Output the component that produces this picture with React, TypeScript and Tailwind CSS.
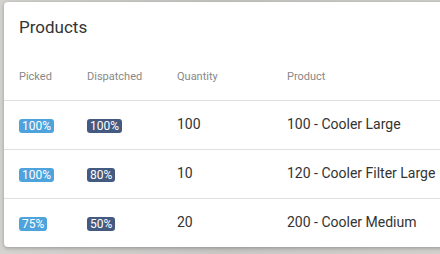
import React from 'react';

interface Row {
  picked: number;
  dispatched: number;
  quantity: number;
  product: string;
}

const rows: Row[] = [
  { picked: 100, dispatched: 100, quantity: 100, product: '100 - Cooler Large' },
  { picked: 100, dispatched: 80, quantity: 10, product: '120 - Cooler Filter Large' },
  { picked: 75, dispatched: 50, quantity: 20, product: '200 - Cooler Medium' },
];

const Badge = ({ value, dark }: { value: number; dark?: boolean }) => (
  <span
    className={`inline-flex items-center h-[14px] px-[3px] rounded-[3px] text-[12px] leading-none text-white ${dark ? 'bg-[#445a80]' : 'bg-[#4fa3dc]'}`}
  >
    {value}%
  </span>
);

export default function App() {
  return (
    <div className="w-[440px] h-[254px] overflow-hidden bg-gradient-to-r from-[#d6d4d1] via-[#c9c7c4] to-[#d3d1ce] font-['Roboto',sans-serif]">
      <div className="ml-[4px] mt-[2px] w-[460px] h-[245px] bg-white rounded-[4px] shadow-[0_1px_4px_rgba(0,0,0,0.3)]">
        <h1 className="pl-[15px] pt-[14px] h-[52px] text-[17px] text-[#333] leading-[22px]">Products</h1>
        <table className="w-full border-collapse text-left">
          <thead>
            <tr className="h-[46px] border-b border-[#e0e0e0]">
              <th className="w-[83px] pl-[15px] font-normal text-[11px] text-[#888]">Picked</th>
              <th className="w-[90px] font-normal text-[11px] text-[#888]">Dispatched</th>
              <th className="w-[110px] font-normal text-[11px] text-[#888]">Quantity</th>
              <th className="font-normal text-[11px] text-[#888]">Product</th>
            </tr>
          </thead>
          <tbody>
            {rows.map((r, i) => (
              <tr key={i} className={`h-[49px] ${i < rows.length - 1 ? 'border-b border-[#e0e0e0]' : ''}`}>
                <td className="pl-[15px]"><Badge value={r.picked} /></td>
                <td><Badge value={r.dispatched} dark /></td>
                <td className="text-[14px] text-[#333]">{r.quantity}</td>
                <td className="text-[14px] text-[#333]">{r.product}</td>
              </tr>
            ))}
          </tbody>
        </table>
      </div>
    </div>
  );
}
